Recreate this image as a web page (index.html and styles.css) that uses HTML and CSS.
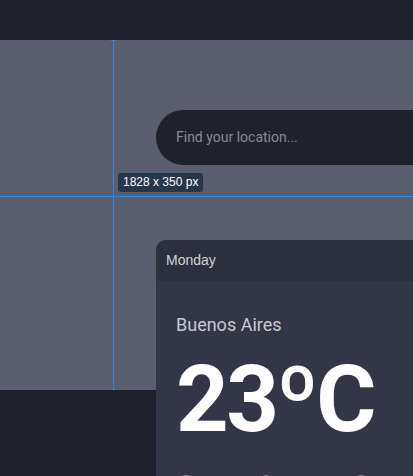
FILE: index.html
```html
<!DOCTYPE html>
<html>
<head>
<meta charset="utf-8">
<link rel="stylesheet" href="styles.css">
</head>
<body>
<div class="topbar"></div>
<section class="hero">
  <div class="guide-v"></div>
  <div class="guide-h"></div>
  <div class="tick tick-top"></div>
  <div class="tick tick-bottom"></div>
  <div class="size-label">1828 x 350 px</div>
  <div class="content">
    <div class="search">Find your location...</div>
    <div class="card">
      <div class="card-head">Monday</div>
      <div class="card-body">
        <div class="city">Buenos Aires</div>
        <div class="temp">23ºC</div>
        <div class="icons">
          <span class="dot d1"></span>
          <span class="dot d2"></span>
          <span class="dot d3"></span>
        </div>
      </div>
    </div>
  </div>
</section>
</body>
</html>
```
FILE: styles.css
```css
html, body {
  margin: 0;
  padding: 0;
  width: 413px;
  height: 476px;
  overflow: hidden;
  background: #1e202b;
  font-family: Roboto, "Liberation Sans", sans-serif;
}
.topbar {
  height: 40px;
  background: #1e202b;
}
.hero {
  position: relative;
  height: 350px;
  background: #5b5d70;
}
.guide-v {
  position: absolute;
  left: 113px;
  top: 0;
  width: 1px;
  height: 350px;
  background: #3a86d4;
}
.guide-h {
  position: absolute;
  left: 0;
  top: 156px;
  width: 413px;
  height: 1px;
  background: #3a86d4;
}
.tick {
  position: absolute;
  left: 111px;
  width: 5px;
  height: 1px;
  background: #3a86d4;
}
.tick-top { top: 0; }
.tick-bottom { top: 349px; }
.size-label {
  position: absolute;
  left: 118px;
  top: 133px;
  height: 19px;
  padding: 0 5px;
  line-height: 19px;
  border-radius: 3px;
  background: #26364b;
  color: #ffffff;
  font-family: "Liberation Sans", Arial, sans-serif;
  font-size: 12px;
}
.content {
  position: relative;
  padding: 70px 0 0 156px;
  display: flex;
  flex-direction: column;
  gap: 75px;
}
.search {
  height: 55px;
  width: 400px;
  border-radius: 28px 0 0 28px;
  background: #1f212c;
  color: #8a8b92;
  font-size: 14px;
  line-height: 55px;
  padding-left: 20px;
  box-sizing: border-box;
}
.card {
  width: 400px;
  border-radius: 10px 0 0 0;
  overflow: hidden;
  background: #333646;
}
.card-head {
  height: 41px;
  line-height: 41px;
  padding-left: 10px;
  background: #2c2f3c;
  color: #d2d3d9;
  font-family: "Liberation Sans", Arial, sans-serif;
  font-size: 14px;
}
.card-body {
  padding: 34px 20px 0 20px;
}
.city {
  color: #c9cad1;
  font-size: 18px;
  line-height: 20px;
}
.temp {
  margin-top: 11px;
  color: #ffffff;
  font-weight: 700;
  font-size: 92px;
  line-height: 108px;
  letter-spacing: -2.5px;
}
.icons {
  display: flex;
  margin-top: 21px;
  padding-left: 2px;
}
.dot {
  display: block;
  width: 16px;
  height: 16px;
  border-radius: 50%;
  background: #8d8f9b;
}
.d1 { margin-left: 0; }
.d2 { margin-left: 67px; width: 10px; height: 10px; }
.d3 { margin-left: 82px; }
```
